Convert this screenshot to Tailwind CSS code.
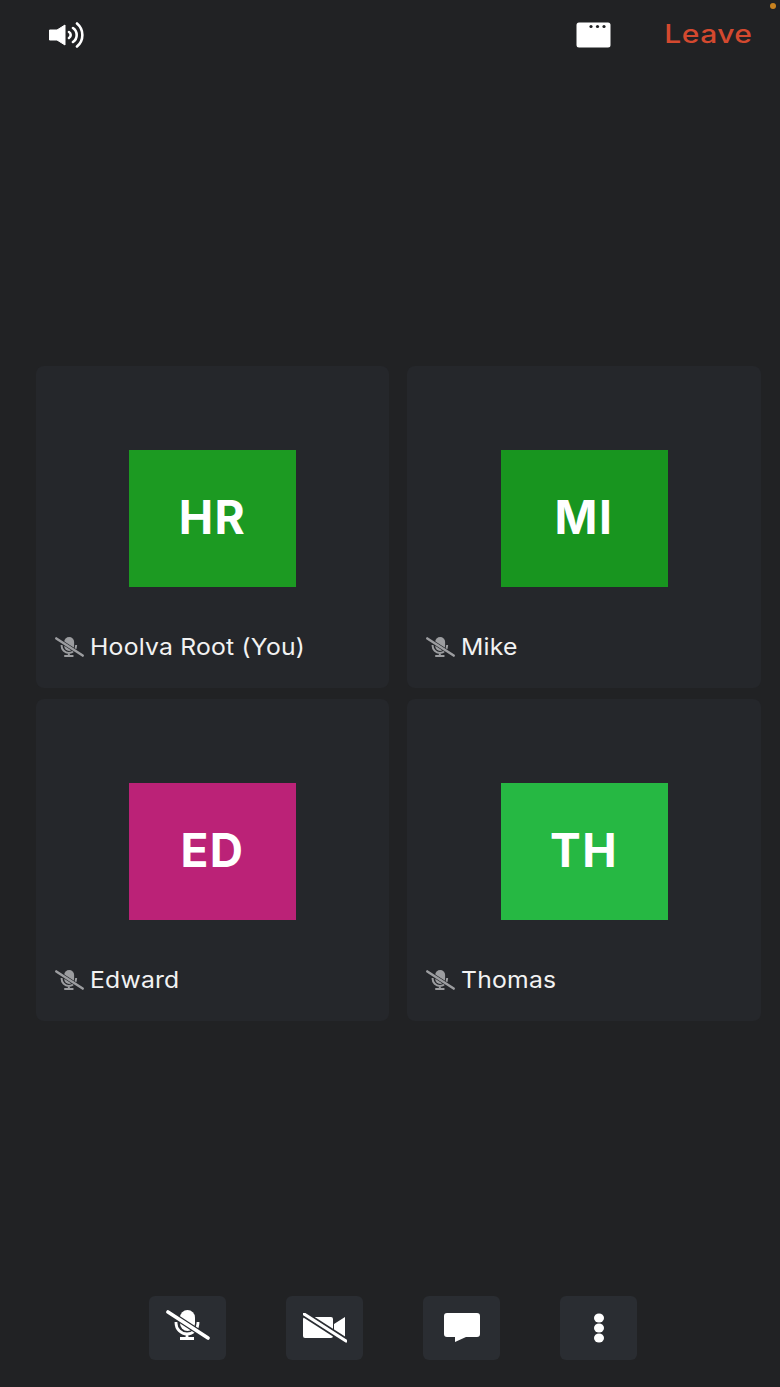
<!DOCTYPE html>
<html lang="en">
<head>
<meta charset="UTF-8" />
<title>Meeting</title>
<script src="https://cdn.jsdelivr.net/npm/@tailwindcss/browser@4"></script>
</head>
<body class="bg-[#212224] text-white font-['Inter',sans-serif]">
<div class="relative w-[780px] h-[1387px] flex flex-col overflow-hidden">

  <!-- camera indicator dot -->
  <span class="absolute top-[3px] right-[4px] w-[6px] h-[6px] rounded-full bg-[#c9821f]"></span>

  <header class="h-[70px] flex items-center pl-[49px] pr-[28px]">
    <svg class="w-[36px] h-[26px] mb-[1px]" viewBox="0 0 36 26" fill="none">
      <path d="M0.500 8h7.500l8-5v20l-8-5h-7.500z" fill="#fff" stroke="#fff" stroke-linejoin="round"/>
      <path d="M20 10a3.500 3.500 0 0 1 0 6M24 6a8.500 8.500 0 0 1 0 14M28 1.500a15 15 0 0 1 0 23" stroke="#fff" stroke-width="2.600" stroke-linecap="round"/>
    </svg>
    <svg class="ml-auto w-[35px] h-[26px]" viewBox="0 0 35 26">
      <rect x="0.500" y="0.500" width="34" height="25" rx="2.500" fill="#fff"/>
      <circle cx="15" cy="4.500" r="1.600" fill="#212224"/>
      <circle cx="21.500" cy="4.500" r="1.600" fill="#212224"/>
      <circle cx="28" cy="4.500" r="1.600" fill="#212224"/>
    </svg>
    <span class="ml-[68px] mb-[2px] text-[25px] leading-none font-medium tracking-[0.4px] origin-right scale-x-[1.2] text-[#d4492f]">Leave</span>
  </header>

  <main class="mt-[296px] ml-[36px] grid grid-cols-[353px_354px] auto-rows-[322px] gap-x-[18px] gap-y-[11px]">
    <div class="rounded-[8px] bg-[#25272b] flex flex-col items-center pt-[84px]">
      <div class="w-[167px] h-[137px] bg-[#1c9a22] flex items-center justify-center pb-[3px] text-[46px] tracking-[1.500px] font-bold">HR</div>
      <div class="self-start mt-[44px] pl-[19px] flex items-center gap-[6px] text-[23px] leading-[32px] tracking-[0.2px] text-[#f2f2f2]">
        <svg class="w-[29px] h-[20px]" viewBox="0 0 44 30" fill="none">
          <rect x="14" y="0" width="15" height="21" rx="7.500" fill="#9c9da0"/>
          <path d="M10 12v1a11 11 0 0 0 11 11a11 11 0 0 0 11-11v-1M21 24v4M14 28.500h14" stroke="#9c9da0" stroke-width="3"/>
          <path d="M2 2l40 26" stroke="#25272b" stroke-width="5.500"/>
          <path d="M2 2l40 26" stroke="#9c9da0" stroke-width="3.800" stroke-linecap="round"/>
        </svg>
        <span class="origin-left scale-x-[1.075]">Hoolva Root (You)</span>
      </div>
    </div>
    <div class="rounded-[8px] bg-[#25272b] flex flex-col items-center pt-[84px]">
      <div class="w-[167px] h-[137px] bg-[#18951f] flex items-center justify-center pb-[3px] text-[46px] tracking-[1.500px] font-bold">MI</div>
      <div class="self-start mt-[44px] pl-[19px] flex items-center gap-[6px] text-[23px] leading-[32px] tracking-[0.2px] text-[#f2f2f2]">
        <svg class="w-[29px] h-[20px]" viewBox="0 0 44 30" fill="none">
          <rect x="14" y="0" width="15" height="21" rx="7.500" fill="#9c9da0"/>
          <path d="M10 12v1a11 11 0 0 0 11 11a11 11 0 0 0 11-11v-1M21 24v4M14 28.500h14" stroke="#9c9da0" stroke-width="3"/>
          <path d="M2 2l40 26" stroke="#25272b" stroke-width="5.500"/>
          <path d="M2 2l40 26" stroke="#9c9da0" stroke-width="3.800" stroke-linecap="round"/>
        </svg>
        <span class="origin-left scale-x-[1.075]">Mike</span>
      </div>
    </div>
    <div class="rounded-[8px] bg-[#25272b] flex flex-col items-center pt-[84px]">
      <div class="w-[167px] h-[137px] bg-[#bb2277] flex items-center justify-center pb-[3px] text-[46px] tracking-[1.500px] font-bold">ED</div>
      <div class="self-start mt-[44px] pl-[19px] flex items-center gap-[6px] text-[23px] leading-[32px] tracking-[0.2px] text-[#f2f2f2]">
        <svg class="w-[29px] h-[20px]" viewBox="0 0 44 30" fill="none">
          <rect x="14" y="0" width="15" height="21" rx="7.500" fill="#9c9da0"/>
          <path d="M10 12v1a11 11 0 0 0 11 11a11 11 0 0 0 11-11v-1M21 24v4M14 28.500h14" stroke="#9c9da0" stroke-width="3"/>
          <path d="M2 2l40 26" stroke="#25272b" stroke-width="5.500"/>
          <path d="M2 2l40 26" stroke="#9c9da0" stroke-width="3.800" stroke-linecap="round"/>
        </svg>
        <span class="origin-left scale-x-[1.075]">Edward</span>
      </div>
    </div>
    <div class="rounded-[8px] bg-[#25272b] flex flex-col items-center pt-[84px]">
      <div class="w-[167px] h-[137px] bg-[#26b843] flex items-center justify-center pb-[3px] text-[46px] tracking-[1.500px] font-bold">TH</div>
      <div class="self-start mt-[44px] pl-[19px] flex items-center gap-[6px] text-[23px] leading-[32px] tracking-[0.2px] text-[#f2f2f2]">
        <svg class="w-[29px] h-[20px]" viewBox="0 0 44 30" fill="none">
          <rect x="14" y="0" width="15" height="21" rx="7.500" fill="#9c9da0"/>
          <path d="M10 12v1a11 11 0 0 0 11 11a11 11 0 0 0 11-11v-1M21 24v4M14 28.500h14" stroke="#9c9da0" stroke-width="3"/>
          <path d="M2 2l40 26" stroke="#25272b" stroke-width="5.500"/>
          <path d="M2 2l40 26" stroke="#9c9da0" stroke-width="3.800" stroke-linecap="round"/>
        </svg>
        <span class="origin-left scale-x-[1.075]">Thomas</span>
      </div>
    </div>
  </main>

  <footer class="mt-auto mb-[27px] ml-[149px] flex gap-[60px]">
    <button class="w-[77px] h-[64px] rounded-[6px] bg-[#2a2d32] flex items-center justify-center">
      <svg class="w-[44px] h-[30px] mb-[6px]" viewBox="0 0 44 30" fill="none">
        <rect x="14" y="0" width="15" height="21" rx="7.500" fill="#fff"/>
        <path d="M10 12v1a11 11 0 0 0 11 11a11 11 0 0 0 11-11v-1M21 24v4M14 28.500h14" stroke="#fff" stroke-width="2.800"/>
        <path d="M2 2l40 26" stroke="#2a2d32" stroke-width="6"/>
        <path d="M2 2l40 26" stroke="#fff" stroke-width="3.600" stroke-linecap="round"/>
      </svg>
    </button>
    <button class="w-[77px] h-[64px] rounded-[6px] bg-[#2a2d32] flex items-center justify-center">
      <svg class="w-[44px] h-[30px]" viewBox="0 0 44 30" fill="none">
        <path d="M2 4h26a2 2 0 0 1 2 2v17a2 2 0 0 1-2 2h-26a2 2 0 0 1-2-2v-17a2 2 0 0 1 2-2zM31 11l11-7v21l-11-5z" fill="#fff"/>
        <path d="M1 1l42 27" stroke="#2a2d32" stroke-width="6.500"/>
        <path d="M1 1l42 27" stroke="#fff" stroke-width="3.200" stroke-linecap="round"/>
      </svg>
    </button>
    <button class="w-[77px] h-[64px] rounded-[6px] bg-[#2a2d32] flex items-center justify-center">
      <svg class="w-[36px] h-[30px]" viewBox="0 0 36 30">
        <path d="M3 0h30a3 3 0 0 1 3 3v18a3 3 0 0 1-3 3h-11l-11 5v-5h-8a3 3 0 0 1-3-3v-18a3 3 0 0 1 3-3z" fill="#fff"/>
      </svg>
    </button>
    <button class="w-[77px] h-[64px] rounded-[6px] bg-[#2a2d32] flex items-center justify-center">
      <svg class="w-[12px] h-[30px]" viewBox="0 0 12 30">
        <ellipse cx="6" cy="5" rx="5" ry="4.500" fill="#fff"/>
        <ellipse cx="6" cy="15" rx="5" ry="4.500" fill="#fff"/>
        <ellipse cx="6" cy="25" rx="5" ry="4.500" fill="#fff"/>
      </svg>
    </button>
  </footer>
</div>
</body>
</html>
